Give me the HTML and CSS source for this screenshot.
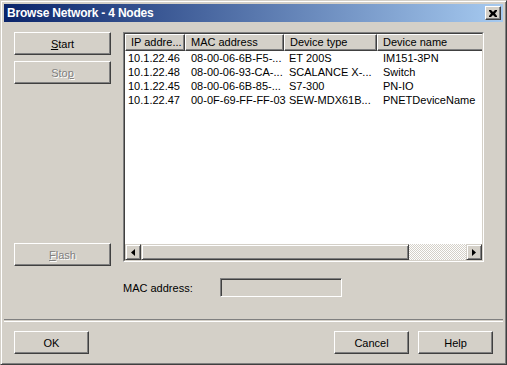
FILE: index.html
```html
<!DOCTYPE html>
<html lang="en">
<head>
  <meta charset="UTF-8">
  <title>Browse Network - 4 Nodes</title>
  <link rel="stylesheet" href="styles.css">
</head>
<body>

<div class="window">
  <div class="titlebar">
    <span class="title">Browse Network - 4 Nodes</span>
    <button class="close-btn">
      <svg width="8" height="7" viewBox="0 0 8 7">
        <path d="M0 0h2l2 2 2-2h2v1l-2 2.5 2 2.5v1h-2l-2-2-2 2h-2v-1l2-2.5-2-2.5z" fill="#000"/>
      </svg>
    </button>
  </div>

  <div class="client">
    <div class="main">
      <div class="side">
        <button class="btn wide"><u>S</u>tart</button>
        <button class="btn wide disabled">Sto<u>p</u></button>
        <button class="btn wide disabled flash"><u>F</u>lash</button>
      </div>

      <div class="content">
        <div class="listview">
          <div class="list-inner">
            <div class="row header">
              <div class="col c1 head">IP addre...</div>
              <div class="col c2 head">MAC address</div>
              <div class="col c3 head">Device type</div>
              <div class="col c4 head">Device name</div>
            </div>
            <div class="rows">
              <div class="row">
                <div class="col c1">10.1.22.46</div>
                <div class="col c2">08-00-06-6B-F5-...</div>
                <div class="col c3">ET 200S</div>
                <div class="col c4">IM151-3PN</div>
              </div>
              <div class="row">
                <div class="col c1">10.1.22.48</div>
                <div class="col c2">08-00-06-93-CA-...</div>
                <div class="col c3">SCALANCE X-...</div>
                <div class="col c4">Switch</div>
              </div>
              <div class="row">
                <div class="col c1">10.1.22.45</div>
                <div class="col c2">08-00-06-6B-85-...</div>
                <div class="col c3">S7-300</div>
                <div class="col c4">PN-IO</div>
              </div>
              <div class="row">
                <div class="col c1">10.1.22.47</div>
                <div class="col c2">00-0F-69-FF-FF-03</div>
                <div class="col c3">SEW-MDX61B...</div>
                <div class="col c4">PNETDeviceName</div>
              </div>
            </div>
            <div class="hscroll">
              <div class="arrow">
                <svg width="4" height="7" viewBox="0 0 4 7"><path d="M4 0v7L0 3.5z" fill="#000"/></svg>
              </div>
              <div class="thumb"></div>
              <div class="track"></div>
              <div class="arrow">
                <svg width="4" height="7" viewBox="0 0 4 7"><path d="M0 0v7l4-3.5z" fill="#000"/></svg>
              </div>
            </div>
          </div>
        </div>

        <div class="mac-row">
          <label>MAC address:</label>
          <div class="mac-field"></div>
        </div>
      </div>
    </div>

    <div class="separator"></div>

    <div class="footer">
      <button class="btn">OK</button>
      <div class="footer-right">
        <button class="btn">Cancel</button>
        <button class="btn">Help</button>
      </div>
    </div>
  </div>
</div>

</body>
</html>
```

FILE: styles.css
```css
body {
  margin: 0;
  font-family: "Liberation Sans", Arial, sans-serif;
  font-size: 11px;
  background: #d4d0c8;
}
.window {
  width: 507px;
  height: 365px;
  box-sizing: border-box;
  background: #d4d0c8;
  border: 1px solid;
  border-color: #d4d0c8 #404040 #404040 #d4d0c8;
  box-shadow: inset 1px 1px 0 #fff, inset -1px -1px 0 #808080;
  padding: 3px;
  display: flex;
  flex-direction: column;
}
.titlebar {
  height: 18px;
  background: linear-gradient(to right, #0a246a, #a6caf0);
  display: flex;
  align-items: center;
  justify-content: space-between;
  padding: 0 2px 0 3px;
}
.title {
  color: #fff;
  font-weight: bold;
  font-size: 12px;
  font-family: "Liberation Sans", Arial, sans-serif;
  letter-spacing: -0.2px;
}
.close-btn {
  width: 16px;
  height: 14px;
  padding: 0;
  background: #d4d0c8;
  border: 1px solid;
  border-color: #fff #404040 #404040 #fff;
  box-shadow: inset -1px -1px 0 #808080;
  display: flex;
  align-items: center;
  justify-content: center;
}
.client {
  flex: 1;
  display: flex;
  flex-direction: column;
}
.main {
  display: flex;
  gap: 12px;
  padding: 10px 0 0 10px;
}
.side {
  width: 97px;
  display: flex;
  flex-direction: column;
  gap: 6px;
  height: 234px;
}
.btn {
  height: 23px;
  width: 75px;
  font-family: "Liberation Sans", Arial, sans-serif;
  font-size: 11px;
  color: #000;
  background: #d4d0c8;
  border: 1px solid;
  border-color: #fff #404040 #404040 #fff;
  box-shadow: inset -1px -1px 0 #808080;
  padding: 0;
}
.btn.wide {
  width: 97px;
}
.btn.disabled {
  color: #808080;
  text-shadow: 1px 1px 0 #fff;
}
.flash {
  margin-top: auto;
}
.content {
  display: flex;
  flex-direction: column;
}
.listview {
  width: 361px;
  height: 230px;
  box-sizing: border-box;
  border: 1px solid;
  border-color: #808080 #fff #fff #808080;
  background: #fff;
}
.list-inner {
  height: 100%;
  box-sizing: border-box;
  border: 1px solid;
  border-color: #404040 #d4d0c8 #d4d0c8 #404040;
  display: flex;
  flex-direction: column;
  overflow: hidden;
}
.row {
  display: flex;
  height: 14px;
  line-height: 14px;
}
.row.header {
  height: 17px;
  line-height: 15px;
}
.rows {
  flex: 1;
}
.col {
  flex: none;
  box-sizing: border-box;
  white-space: nowrap;
  padding-left: 3px;
}
.c1 { width: 60px; }
.c2 { width: 99px; padding-left: 6px; }
.c3 { width: 93px; padding-left: 5px; }
.c4 { width: 110px; padding-left: 6px; }
.head {
  background: #d4d0c8;
  border: 1px solid;
  border-color: #fff #404040 #404040 #fff;
  box-shadow: inset -1px -1px 0 #808080;
  padding-left: 5px;
}
.hscroll {
  height: 16px;
  display: flex;
  background: #d4d0c8;
}
.arrow {
  width: 16px;
  height: 16px;
  box-sizing: border-box;
  border: 1px solid;
  border-color: #d4d0c8 #404040 #404040 #d4d0c8;
  box-shadow: inset 1px 1px 0 #fff, inset -1px -1px 0 #808080;
  display: flex;
  align-items: center;
  justify-content: center;
  background: #d4d0c8;
}
.thumb {
  width: 268px;
  box-sizing: border-box;
  border: 1px solid;
  border-color: #d4d0c8 #404040 #404040 #d4d0c8;
  box-shadow: inset 1px 1px 0 #fff, inset -1px -1px 0 #808080;
}
.track {
  flex: 1;
  background-color: #fff;
  background-image: repeating-conic-gradient(#d4d0c8 0 25%, #fff 0 50%);
  background-size: 2px 2px;
}
.mac-row {
  display: flex;
  align-items: center;
  margin-top: 16px;
  gap: 27px;
}
.mac-field {
  width: 122px;
  height: 19px;
  box-sizing: border-box;
  border: 1px solid;
  border-color: #808080 #fff #fff #808080;
  box-shadow: inset 1px 1px 0 #404040;
  background: #d4d0c8;
}
.separator {
  margin-top: 22px;
  height: 1px;
  border-top: 1px solid #808080;
  border-bottom: 1px solid #fff;
}
.footer {
  display: flex;
  justify-content: space-between;
  padding: 9px 10px 0 10px;
}
.footer-right {
  display: flex;
  gap: 9px;
}
```
